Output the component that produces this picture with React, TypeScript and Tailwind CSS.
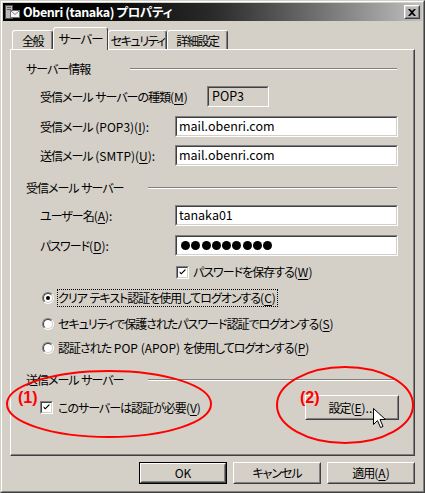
import type { ReactNode } from 'react'

// 和文は詰め、欧文はそのまま
function J({ t, tight = 'tracking-[-1px]' }: { t: string; tight?: string }) {
  const parts = t.split(/([\u3000-\u9fff\uff00-\uffef]+)/).filter(Boolean)
  return (
    <>
      {parts.map((p, i) =>
        /[\u3000-\u9fff\uff00-\uffef]/.test(p) ? (
          <span key={i} className={tight}>
            {p}
          </span>
        ) : (
          <span key={i} className="tracking-normal whitespace-pre">
            {p}
          </span>
        )
      )}
    </>
  )
}

function U({ children }: { children: ReactNode }) {
  return <span className="underline decoration-1 underline-offset-[2px] tracking-normal">{children}</span>
}

function Sunken({ className = '', inner = 'bg-white', children }: { className?: string; inner?: string; children?: ReactNode }) {
  return (
    <div className={`border border-t-[#808080] border-l-[#808080] border-b-white border-r-white ${className}`}>
      <div className={`h-full w-full border border-t-[#404040] border-l-[#404040] border-b-[#d4d0c8] border-r-[#d4d0c8] flex items-center ${inner}`}>
        {children}
      </div>
    </div>
  )
}

function Raised({ className = '', children }: { className?: string; children?: ReactNode }) {
  return (
    <div className={`border border-t-white border-l-white border-b-[#404040] border-r-[#404040] ${className}`}>
      <div className="h-full w-full border border-t-[#d4d0c8] border-l-[#d4d0c8] border-b-[#808080] border-r-[#808080] flex items-center justify-center">
        {children}
      </div>
    </div>
  )
}

function Etched() {
  return <div className="flex-1 h-[2px] border-t border-t-[#808080] border-b border-b-white" />
}

function GroupHeader({ label, width }: { label: string; width: string }) {
  return (
    <div className="flex items-center h-[16px] w-[371px]">
      <span className={`${width} whitespace-nowrap`}>
        <J t={label} />
      </span>
      <Etched />
    </div>
  )
}

function CheckBox() {
  return (
    <Sunken className="w-[13px] h-[13px] shrink-0">
      <svg width="11" height="11" viewBox="0 0 11 11" className="block">
        <path d="M2 4 L2 6 L4 8 L9 3 L9 1 L4 6 Z" fill="#000" />
      </svg>
    </Sunken>
  )
}

function Radio({ checked = false }: { checked?: boolean }) {
  return (
    <div className="w-[12px] h-[12px] shrink-0 rounded-full border border-t-[#808080] border-l-[#808080] border-b-white border-r-white">
      <div className="w-full h-full rounded-full bg-white border border-t-[#404040] border-l-[#404040] border-b-[#d4d0c8] border-r-[#d4d0c8] flex items-center justify-center">
        {checked && <div className="w-[4px] h-[4px] rounded-full bg-black" />}
      </div>
    </div>
  )
}

function FieldRow({ label, value, className = '' }: { label: ReactNode; value: ReactNode; className?: string }) {
  return (
    <div className={`flex items-center h-[21px] ${className}`}>
      <span className="ml-[14px] w-[135px] whitespace-nowrap">{label}</span>
      <Sunken className="w-[223px] h-[21px]">
        <span className="pl-[2px] text-[12.5px] leading-none">{value}</span>
      </Sunken>
    </div>
  )
}

export default function App() {
  const tabs = [
    { label: '全般', w: 'w-[41px]' },
    { label: 'サーバー', w: 'w-[55px]', active: true },
    { label: 'セキュリティ', w: 'w-[59px]' },
    { label: '詳細設定', w: 'w-[61px]' },
  ]

  return (
    <div className="relative w-[425px] h-[493px] overflow-hidden bg-[#d4d0c8] text-black text-[12px] leading-none font-['Noto_Sans_CJK_JP','Noto_Sans',sans-serif] [font-feature-settings:'palt']">
      <div className="h-full border border-t-[#d4d0c8] border-l-[#d4d0c8] border-b-[#404040] border-r-[#404040]">
        <div className="h-full border border-t-white border-l-white border-b-[#808080] border-r-[#808080] p-[1px] flex flex-col">
          {/* タイトルバー */}
          <div className="h-[18px] flex items-center bg-gradient-to-r from-black via-[#2a2a2a] to-[#c0c0c0]">
            <svg width="16" height="16" viewBox="0 0 16 16" className="ml-[1px] shrink-0">
              <rect x="1.5" y="1.5" width="7" height="13" fill="#b8b8b8" stroke="#505050" />
              <rect x="3" y="3" width="4" height="1" fill="#606060" />
              <rect x="3" y="5" width="4" height="1" fill="#606060" />
              <rect x="6.5" y="6.5" width="9" height="7" fill="#f4f4f4" stroke="#707070" />
              <path d="M6.5 6.5 L11 10.5 L15.5 6.5" fill="none" stroke="#808080" />
            </svg>
            <span className="ml-[3px] text-white font-bold text-[12.5px] tracking-[-0.4px] whitespace-nowrap">Obenri (tanaka) プロパティ</span>
            <div className="ml-auto mr-[2px]">
              <Raised className="w-[16px] h-[14px]">
                <svg width="8" height="7" viewBox="0 0 8 7" className="block">
                  <path d="M0 0 L2 0 L4 2 L6 0 L8 0 L5 3.5 L8 7 L6 7 L4 5 L2 7 L0 7 L3 3.5 Z" fill="#000" />
                </svg>
              </Raised>
            </div>
          </div>

          <div className="px-[7px] pt-[6px]">
            {/* タブ */}
            <div className="flex items-end h-[22px] pl-[2px]">
              {tabs.map((t) =>
                t.active ? (
                  <div
                    key={t.label}
                    className={`${t.w} relative z-10 h-[23px] -mb-px bg-[#d4d0c8] rounded-t-[3px] border-t border-l border-r border-t-white border-l-white border-r-[#404040] flex items-start justify-center pt-[5px] whitespace-nowrap text-[12.5px]`}
                  >
                    <J t={t.label} />
                  </div>
                ) : (
                  <div
                    key={t.label}
                    className={`${t.w} h-[19px] overflow-hidden rounded-t-[3px] border-t border-l border-r border-t-white border-l-white border-r-[#404040] shadow-[inset_-1px_0_0_#808080] flex items-start justify-center pt-[4px] whitespace-nowrap text-[12px]`}
                  >
                    <J t={t.label} tight="tracking-[-1.4px]" />
                  </div>
                )
              )}
            </div>

            {/* タブパネル */}
            <div className="h-[407px] border border-t-white border-l-white border-b-[#404040] border-r-[#404040] shadow-[inset_-1px_-1px_0_#808080] pl-[15px] pt-[11px] flex flex-col">
              <GroupHeader label="サーバー情報" width="w-[104px]" />

              <div className="mt-[9px] flex items-center h-[21px]">
                <span className="ml-[14px] w-[167px] whitespace-nowrap">
                  <J t="受信メール サーバーの種類(" />
                  <U>M</U>
                  <J t=")" />
                </span>
                <Sunken className="w-[62px] h-[21px]" inner="bg-[#d4d0c8]">
                  <span className="pl-[3px] text-[12.5px]">POP3</span>
                </Sunken>
              </div>

              <FieldRow
                className="mt-[9px]"
                label={
                  <>
                    <J t="受信メール (POP3)(" />
                    <U>I</U>
                    <J t="):" />
                  </>
                }
                value="mail.obenri.com"
              />
              <FieldRow
                className="mt-[8px]"
                label={
                  <>
                    <J t="送信メール (SMTP)(" />
                    <U>U</U>
                    <J t="):" />
                  </>
                }
                value="mail.obenri.com"
              />

              <div className="mt-[14px]">
                <GroupHeader label="受信メール サーバー" width="w-[122px]" />
              </div>

              <FieldRow
                className="mt-[9px]"
                label={
                  <>
                    <J t="ユーザー名(" />
                    <U>A</U>
                    <J t="):" />
                  </>
                }
                value="tanaka01"
              />
              <FieldRow
                className="mt-[9px]"
                label={
                  <>
                    <J t="パスワード(" />
                    <U>D</U>
                    <J t="):" />
                  </>
                }
                value={
                  <span className="flex gap-[1.3px] pl-[2px]">
                    {Array.from({ length: 9 }).map((_, i) => (
                      <span key={i} className="w-[9px] h-[9px] rounded-full bg-black" />
                    ))}
                  </span>
                }
              />

              <div className="mt-[9px] flex items-center h-[14px]">
                <div className="ml-[150px]">
                  <CheckBox />
                </div>
                <span className="ml-[4px] whitespace-nowrap">
                  <J t="パスワードを保存する(" />
                  <U>W</U>
                  <J t=")" />
                </span>
              </div>

              <div className="mt-[10px] flex items-center h-[18px]">
                <div className="ml-[16px]">
                  <Radio checked />
                </div>
                <span className="ml-[3px] border border-dotted border-black pl-0 pr-[1px] py-[2px] whitespace-nowrap">
                  <J t="クリア テキスト認証を使用してログオンする(" />
                  <U>C</U>
                  <J t=")" />
                </span>
              </div>
              <div className="mt-[8px] flex items-center h-[18px]">
                <div className="ml-[16px]">
                  <Radio />
                </div>
                <span className="ml-[3px] border border-transparent py-[2px] whitespace-nowrap">
                  <J t="セキュリティで保護されたパスワード認証でログオンする(" />
                  <U>S</U>
                  <J t=")" />
                </span>
              </div>
              <div className="mt-[6px] flex items-center h-[18px]">
                <div className="ml-[16px]">
                  <Radio />
                </div>
                <span className="ml-[3px] border border-transparent py-[2px] whitespace-nowrap">
                  <J t="認証された POP (APOP) を使用してログオンする(" />
                  <U>P</U>
                  <J t=")" />
                </span>
              </div>

              <div className="mt-[15px]">
                <GroupHeader label="送信メール サーバー" width="w-[122px]" />
              </div>

              <div className="mt-[7px] flex items-center h-[25px]">
                <div className="ml-[14px]">
                  <CheckBox />
                </div>
                <span className="ml-[5px] whitespace-nowrap">
                  <J t="このサーバーは認証が必要(" />
                  <U>V</U>
                  <J t=")" />
                </span>
                <Raised className="ml-auto mr-[15px] w-[94px] h-[25px]">
                  <span className="whitespace-nowrap">
                    <J t="設定(" />
                    <U>E</U>
                    <J t=")..." />
                  </span>
                </Raised>
              </div>
            </div>

            {/* ボタン */}
            <div className="mt-[6px] flex justify-end gap-[6px]">
              <div className="w-[88px] h-[22px] border border-black">
                <Raised className="w-full h-full">OK</Raised>
              </div>
              <Raised className="w-[88px] h-[22px]">
                <J t="キャンセル" />
              </Raised>
              <Raised className="w-[88px] h-[22px]">
                <span className="whitespace-nowrap">
                  <J t="適用(" />
                  <U>A</U>
                  <J t=")" />
                </span>
              </Raised>
            </div>
          </div>
        </div>
      </div>

      {/* 注釈 */}
      <svg className="absolute inset-0 pointer-events-none" width="425" height="493" viewBox="0 0 425 493">
        <ellipse cx="109" cy="404" rx="102" ry="33" fill="none" stroke="#ff0000" strokeWidth="2" />
        <ellipse cx="345" cy="405" rx="68" ry="38" fill="none" stroke="#ff0000" strokeWidth="2" />
        <path
          d="M373.5 408.5 L373.5 424.5 L377.5 420.5 L380.5 427.5 L383 426.5 L380 419.5 L385.5 419.5 Z"
          fill="#fff"
          stroke="#000"
          strokeWidth="1"
        />
      </svg>
      <span className="absolute left-[18px] top-[390px] text-[#ff0000] font-bold text-[16px] font-['Liberation_Sans',sans-serif]">(1)</span>
      <span className="absolute left-[300px] top-[390px] text-[#ff0000] font-bold text-[16px] font-['Liberation_Sans',sans-serif]">(2)</span>
    </div>
  )
}
